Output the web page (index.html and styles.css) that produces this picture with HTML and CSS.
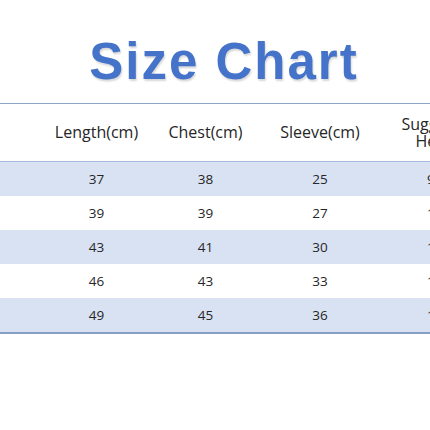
FILE: index.html
```html
<!DOCTYPE html>
<html>
<head>
<meta charset="utf-8">
<link rel="stylesheet" href="styles.css">
</head>
<body>
<div class="page">
  <h1 class="title">Size Chart</h1>
  <table class="chart">
    <colgroup>
      <col class="c0"><col class="c1"><col class="c2"><col class="c3"><col class="c4">
    </colgroup>
    <thead>
      <tr><th></th><th>Length(cm)</th><th>Chest(cm)</th><th>Sleeve(cm)</th><th>Suggested<br>Height</th></tr>
    </thead>
    <tbody>
      <tr class="alt"><td></td><td>37</td><td>38</td><td>25</td><td class="h">90</td></tr>
      <tr><td></td><td>39</td><td>39</td><td>27</td><td class="h">100</td></tr>
      <tr class="alt"><td></td><td>43</td><td>41</td><td>30</td><td class="h">110</td></tr>
      <tr><td></td><td>46</td><td>43</td><td>33</td><td class="h">120</td></tr>
      <tr class="alt"><td></td><td>49</td><td>45</td><td>36</td><td class="h">130</td></tr>
    </tbody>
  </table>
</div>
</body>
</html>
```

FILE: styles.css
```css
html, body {
  margin: 0;
  padding: 0;
  background: #ffffff;
  overflow: hidden;
}
.page {
  width: 430px;
  height: 430px;
  overflow: hidden;
}
.title {
  margin: 36px 0 16px 0;
  padding-left: 18px;
  height: 51px;
  line-height: 51px;
  text-align: center;
  font-family: "Liberation Sans", Arial, sans-serif;
  font-weight: bold;
  font-size: 51px;
  letter-spacing: 2px;
  color: #4573c9;
  text-shadow: 1px 2px 2px rgba(0, 0, 0, 0.16);
}
.chart {
  border-collapse: collapse;
  table-layout: fixed;
  width: 500px;
  font-family: "Open Sans", "Noto Sans", sans-serif;
  color: #262626;
}
.c0 { width: 42px; }
.c1 { width: 109px; }
.c2 { width: 109px; }
.c3 { width: 120px; }
.c4 { width: 120px; }
.chart thead tr {
  border-top: 1px solid #8ca6c8;
  border-bottom: 1px solid #a7bbdc;
}
.chart th {
  height: 57px;
  padding: 0;
  font-weight: normal;
  font-size: 16px;
  line-height: 17px;
  text-align: center;
  vertical-align: middle;
}
.chart td {
  height: 34px;
  padding: 0;
  font-size: 13.5px;
  text-align: center;
  vertical-align: middle;
}
.chart td.h {
  text-align: left;
  padding-left: 47px;
}
.chart tbody tr:last-child {
  border-bottom: 2px solid #86a0c4;
}
.chart tr.alt {
  background: #d9e2f3;
}
```
